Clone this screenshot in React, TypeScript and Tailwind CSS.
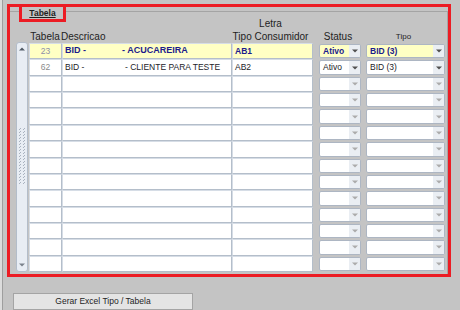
import React from 'react';

type Row = {
  id?: string;
  descA?: string;
  descB?: string;
  gap?: string;
  letra?: string;
  status?: string;
  tipo?: string;
  sel?: boolean;
};

const filled: Row[] = [
  { id: '23', descA: 'BID -', descB: '- ACUCAREIRA', gap: 'w-[57px]', letra: 'AB1', status: 'Ativo', tipo: 'BID (3)', sel: true },
  { id: '62', descA: 'BID -', descB: '- CLIENTE PARA TESTE', gap: 'w-[60px]', letra: 'AB2', status: 'Ativo', tipo: 'BID (3)' },
];
const rows: Row[] = [...filled, ...Array.from({ length: 12 }, () => ({}))];

function Arrow({ on }: { on: boolean }) {
  return (
    <svg width="6" height="4" viewBox="0 0 6 4">
      <path d="M0 0.5h6L3 3.5z" fill={on ? '#505050' : '#ababab'} />
    </svg>
  );
}

function Combo({ text, sel, w }: { text?: string; sel?: boolean; w: string }) {
  return (
    <div className={`${w} shrink-0 my-[1px] flex border border-[#adb6c3] rounded-[2px] overflow-hidden ${sel ? 'bg-[#ffffc4]' : 'bg-white'}`}>
      <div className={`flex-1 flex items-center pl-[3px] text-[8.5px] leading-none whitespace-nowrap ${sel ? 'font-bold text-[#1c1c8c]' : 'text-[#222228]'}`}>
        {text}
      </div>
      <div className="w-[11px] flex items-center justify-center bg-[#eaeef3]">
        <Arrow on={!!text} />
      </div>
    </div>
  );
}

function Grip() {
  const marks = Array.from({ length: 19 }, (_, i) => i * 3);
  return (
    <svg width="8" height="58" viewBox="0 0 8 58">
      {marks.map((y) => (
        <g key={y}>
          <rect x="1" y={y + 1} width="1" height="1" fill="#a9b2bf" />
          <rect x="2" y={y} width="1" height="1" fill="#a9b2bf" />
          <rect x="5" y={y + 1} width="1" height="1" fill="#a9b2bf" />
          <rect x="6" y={y} width="1" height="1" fill="#a9b2bf" />
        </g>
      ))}
    </svg>
  );
}

const cell = 'border-t border-l border-[#d6dde6] border-r border-b border-r-[#b4beca] border-b-[#b4beca]';

export default function App() {
  return (
    <div className="w-[460px] h-[310px] bg-[#c4c4c4] overflow-hidden flex font-['Liberation_Sans',Arial,sans-serif]">
      <div className="w-[2px] bg-[#dcdcdc]" />
      <div className="w-[1px] bg-[#9e9e9e]" />
      <div className="flex-1 flex flex-col">
        {/* bordered panel */}
        <div className="relative ml-[4px] mt-[4px] w-[444px] h-[273px] border-[3px] border-[#ec1c24]">
          <div className="mt-[4px] h-[263px] border-t border-r border-[#a4a4a4] flex flex-col">
            {/* header */}
            <div className="h-[31px] flex items-end text-[10px] leading-[13px] text-[#1e1e1e] pl-[6px]">
              <div className="w-[12px]" />
              <div className="w-[34px] text-center">Tabela</div>
              <div className="w-[169px] -ml-[1px]">Descricao</div>
              <div className="w-[81px] text-center">
                <div>Letra</div>
                <div className="whitespace-nowrap">Tipo Consumidor</div>
              </div>
              <div className="w-[6px]" />
              <div className="w-[42px] text-center">Status</div>
              <div className="w-[5px]" />
              <div className="w-[79px] text-center text-[8px] leading-[12px]">Tipo</div>
            </div>
            {/* table */}
            <div className="h-[229px] flex pl-[6px]">
              <div className="w-[12px] h-[230px] -mt-[1px] mr-[1px] bg-[#e8edf4] border border-[#b3bdca] rounded-[3px] flex flex-col items-center justify-between py-[4px]">
                <svg width="6" height="4" viewBox="0 0 6 4">
                  <path d="M0 3.5h6L3 0.5z" fill="#505a66" />
                </svg>
                <Grip />
                <svg width="6" height="4" viewBox="0 0 6 4">
                  <path d="M0 0.5h6L3 3.5z" fill="#7a828c" />
                </svg>
              </div>
              <div className="flex flex-col">
                {rows.map((r, i) => (
                  <div key={i} className="flex-1 flex">
                    <div className={`w-[33px] flex items-center justify-center ${cell} text-[8.5px] ${r.sel ? 'bg-[#ffffc4] text-[#8e8ea8]' : 'bg-white text-[#8a8a8a]'}`}>
                      {r.id}
                    </div>
                    <div className={`w-[170px] flex items-center pl-[2px] ${cell} whitespace-nowrap ${r.sel ? 'bg-[#ffffc4] font-bold text-[#1c1c8c] text-[9px]' : 'bg-white text-[#222228] text-[8.5px]'}`}>
                      {r.descA && <span className={`inline-block ${r.gap}`}>{r.descA}</span>}
                      {r.descB}
                    </div>
                    <div className={`w-[81px] flex items-center pl-[2px] ${cell} text-[8.5px] ${r.sel ? 'bg-[#ffffc4] font-bold text-[#1c1c8c]' : 'bg-white text-[#222228]'}`}>
                      {r.letra}
                    </div>
                    <div className="w-[6px]" />
                    <Combo text={r.status} sel={r.sel} w="w-[42px]" />
                    <div className="w-[5px]" />
                    <Combo text={r.tipo} sel={r.sel} w="w-[79px]" />
                  </div>
                ))}
              </div>
            </div>
          </div>
          {/* highlight around title */}
          <div className="absolute -left-[3px] -top-[3px] ml-[12px] w-[47px] h-[18px] border-[3px] border-[#ec1c24] flex items-center justify-center bg-[#c4c4c4]">
            <span className="text-[8.5px] font-bold underline text-[#1e1e1e] leading-none">Tabela</span>
          </div>
        </div>
        <div className="mt-[16px] ml-[10px] w-[180px] h-[17px] bg-[#e4e4e4] border border-[#a4a4a4] flex items-center justify-center text-[8.5px] text-[#1e1e1e]">
          Gerar Excel Tipo / Tabela
        </div>
      </div>
    </div>
  );
}
